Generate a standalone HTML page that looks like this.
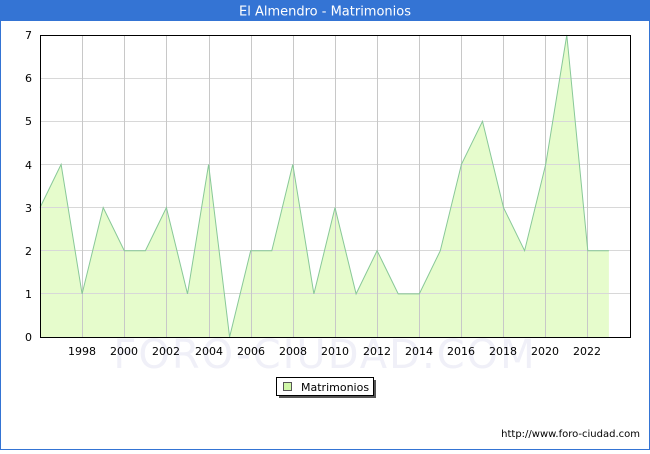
<!DOCTYPE html>
<html><head><meta charset="utf-8"><style>
body{margin:0;width:650px;height:450px;overflow:hidden;background:#fff;font-family:"DejaVu Sans","Liberation Sans",sans-serif;}
</style></head><body>
<svg width="650" height="450" xmlns="http://www.w3.org/2000/svg" font-family="DejaVu Sans, Liberation Sans, sans-serif">
<rect x="0.5" y="0.5" width="649" height="449" fill="#fff" stroke="#3474d4" stroke-width="1"/>
<rect x="0" y="0" width="650" height="21" fill="#3474d4"/>
<text x="325" y="15.5" text-anchor="middle" font-size="13" fill="#fff">El Almendro - Matrimonios</text>
<text x="325" y="368" text-anchor="middle" font-size="40" fill="#f0f0f8" letter-spacing="2">FORO-CIUDAD.COM</text>
<polygon fill="#e6fccc" points="40,337 40,207.6 61.1,164.4 82.1,293.9 103.2,207.6 124.3,250.7 145.4,250.7 166.4,207.6 187.5,293.9 208.6,164.4 229.6,337 250.7,250.7 271.8,250.7 292.8,164.4 313.9,293.9 335,207.6 356.1,293.9 377.1,250.7 398.2,293.9 419.3,293.9 440.3,250.7 461.4,164.4 482.5,121.3 503.5,207.6 524.6,250.7 545.7,164.4 566.8,35 587.8,250.7 608.9,250.7 608.9,337"/>
<g stroke="#d8d8d8" stroke-width="1">
<line x1="40" x2="630" y1="293.5" y2="293.5"/><line x1="40" x2="630" y1="250.5" y2="250.5"/><line x1="40" x2="630" y1="207.5" y2="207.5"/><line x1="40" x2="630" y1="164.5" y2="164.5"/><line x1="40" x2="630" y1="121.5" y2="121.5"/><line x1="40" x2="630" y1="78.5" y2="78.5"/>
</g>
<g stroke="#c8c8c8" stroke-width="1">
<line x1="82.5" x2="82.5" y1="35" y2="337"/><line x1="124.5" x2="124.5" y1="35" y2="337"/><line x1="166.5" x2="166.5" y1="35" y2="337"/><line x1="209.5" x2="209.5" y1="35" y2="337"/><line x1="251.5" x2="251.5" y1="35" y2="337"/><line x1="293.5" x2="293.5" y1="35" y2="337"/><line x1="335.5" x2="335.5" y1="35" y2="337"/><line x1="377.5" x2="377.5" y1="35" y2="337"/><line x1="419.5" x2="419.5" y1="35" y2="337"/><line x1="461.5" x2="461.5" y1="35" y2="337"/><line x1="503.5" x2="503.5" y1="35" y2="337"/><line x1="545.5" x2="545.5" y1="35" y2="337"/><line x1="587.5" x2="587.5" y1="35" y2="337"/>
</g>
<polyline fill="none" stroke="#88c898" stroke-width="1" points="40,207.6 61.1,164.4 82.1,293.9 103.2,207.6 124.3,250.7 145.4,250.7 166.4,207.6 187.5,293.9 208.6,164.4 229.6,337 250.7,250.7 271.8,250.7 292.8,164.4 313.9,293.9 335,207.6 356.1,293.9 377.1,250.7 398.2,293.9 419.3,293.9 440.3,250.7 461.4,164.4 482.5,121.3 503.5,207.6 524.6,250.7 545.7,164.4 566.8,35 587.8,250.7 608.9,250.7"/>
<rect x="40.5" y="35.5" width="590" height="302" fill="none" stroke="#000" stroke-width="1"/>
<g font-size="11" fill="#000" text-anchor="end">
<text x="32" y="341">0</text><text x="32" y="298">1</text><text x="32" y="255">2</text><text x="32" y="212">3</text><text x="32" y="169">4</text><text x="32" y="125">5</text><text x="32" y="82">6</text><text x="32" y="39">7</text>
</g>
<g font-size="11" fill="#000" text-anchor="middle">
<text x="82" y="355">1998</text><text x="124" y="355">2000</text><text x="166" y="355">2002</text><text x="209" y="355">2004</text><text x="251" y="355">2006</text><text x="293" y="355">2008</text><text x="335" y="355">2010</text><text x="377" y="355">2012</text><text x="419" y="355">2014</text><text x="461" y="355">2016</text><text x="503" y="355">2018</text><text x="545" y="355">2020</text><text x="587" y="355">2022</text>
</g>
<rect x="279" y="380" width="97" height="18" fill="#555"/>
<rect x="276.5" y="377.5" width="97" height="18" fill="#fff" stroke="#000"/>
<rect x="283.5" y="382.5" width="8" height="8" fill="#d0f8a8" stroke="#555"/>
<text x="301" y="391" font-size="11" fill="#000">Matrimonios</text>
<text x="640" y="437" text-anchor="end" font-size="10" fill="#000">http://www.foro-ciudad.com</text>
</svg>
</body></html>
